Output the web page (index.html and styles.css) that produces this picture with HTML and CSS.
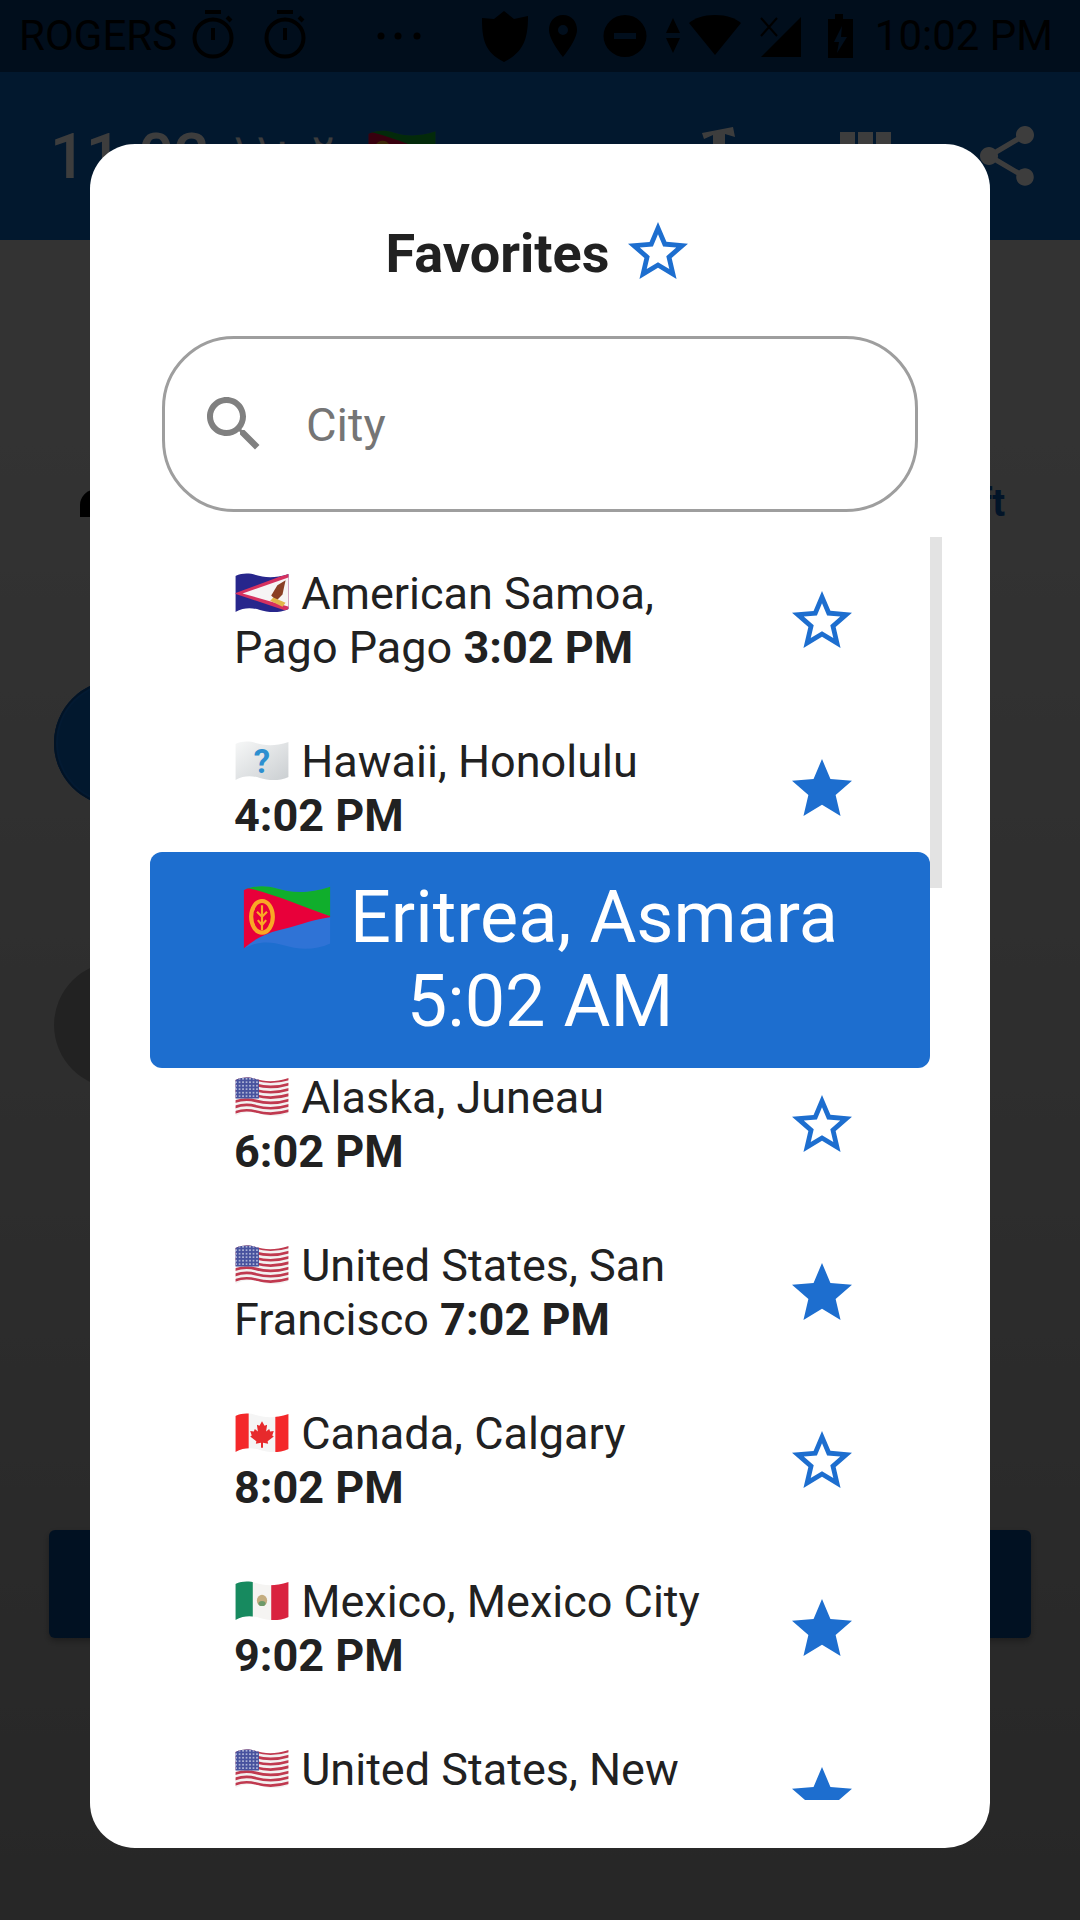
FILE: index.html
```html
<!DOCTYPE html>
<html lang="en">
<head>
  <meta charset="UTF-8">
  <title>Favorites</title>
  <link rel="stylesheet" href="styles.css">
</head>
<body>
  <svg class="defs" width="0" height="0">
    <defs>
      <clipPath id="wave-clip">
        <path d="M1 3C8 0 14 0 21 2S38 6 53 1V35C42 40 32 38 25 36S10 33 1 38Z"/>
      </clipPath>
      <path id="wave" d="M0 2C8 -1 14 -1 21 1S38 5 54 0" fill="none"/>
      <pattern id="us-stars" width="3.400" height="3.400" patternUnits="userSpaceOnUse">
        <circle cx="1.700" cy="1.700" r=".75" fill="#dfe3f2"/>
      </pattern>
      <linearGradient id="paper" x1="0" y1="0" x2="1" y2="1">
        <stop offset="0" stop-color="#f7f8f8"/>
        <stop offset="1" stop-color="#c9cdd0"/>
      </linearGradient>
      <symbol id="star-o" viewBox="0 0 24 24">
        <path d="M22 9.24l-7.19-.62L12 2 9.19 8.63 2 9.24l5.46 4.73L5.82 21 12 17.27 18.18 21l-1.63-7.03L22 9.24zM12 15.4l-3.76 2.27 1-4.28-3.32-2.88 4.38-.38L12 6.1l1.71 4.04 4.38.38-3.32 2.88 1 4.28L12 15.4z"/>
      </symbol>
      <symbol id="star" viewBox="0 0 24 24">
        <path d="M12 17.27L18.18 21l-1.64-7.03L22 9.24l-7.19-.61L12 2 9.19 8.63 2 9.24l5.46 4.73L5.82 21z"/>
      </symbol>
      <symbol id="flag-us" viewBox="0 0 54 40">
        <g clip-path="url(#wave-clip)">
          <rect width="54" height="40" fill="#f3f1f1"/>
          <g stroke="#c0394f" stroke-width="2.600">
            <use href="#wave" y="1.500"/>
            <use href="#wave" y="6.700"/>
            <use href="#wave" y="11.900"/>
            <use href="#wave" y="17.100"/>
            <use href="#wave" y="22.300"/>
            <use href="#wave" y="27.500"/>
            <use href="#wave" y="32.700"/>
          </g>
          <rect y="0" width="24" height="21" fill="#47529e"/>
          <rect y="0" width="24" height="21" fill="url(#us-stars)"/>
        </g>
      </symbol>
      <symbol id="flag-as" viewBox="0 0 54 40">
        <g clip-path="url(#wave-clip)">
          <rect width="54" height="40" fill="#27268c"/>
          <path d="M54 0L0 20L54 38Z" fill="#d6315f"/>
          <path d="M54 4L8 20L54 33Z" fill="#f6f4f4"/>
          <path d="M50 7L42 12L36 22L41 27L47 21Z" fill="#8a3f24"/>
          <path d="M35 27L47 33L50 29L38 24Z" fill="#e2b64a"/>
        </g>
      </symbol>
      <symbol id="flag-unknown" viewBox="0 0 54 40">
        <g clip-path="url(#wave-clip)">
          <rect width="54" height="40" fill="url(#paper)"/>
          <text class="flag-mark" x="27" y="31">?</text>
        </g>
      </symbol>
      <symbol id="flag-ca" viewBox="0 0 54 40">
        <g clip-path="url(#wave-clip)">
          <rect width="54" height="40" fill="#f5f5f5"/>
          <rect width="14" height="40" fill="#f4282a"/>
          <rect x="40" width="14" height="40" fill="#f4282a"/>
          <path d="M27 8L29.500 12.500L32 11.500L31 18L34 15.500L35 18L38.500 17.500L37 22L38.500 23L32.500 27.500L33 30L28 29V34H26V29L21 30L21.500 27.500L15.500 23L17 22L15.500 17.500L19 18L20 15.500L23 18L22 11.500L24.500 12.500Z" fill="#e72a2c"/>
        </g>
      </symbol>
      <symbol id="flag-mx" viewBox="0 0 54 40">
        <g clip-path="url(#wave-clip)">
          <rect width="54" height="40" fill="#f5f4f2"/>
          <rect width="18" height="40" fill="#178a5f"/>
          <rect x="36" width="18" height="40" fill="#d9233f"/>
          <ellipse cx="27" cy="19" rx="5" ry="5.500" fill="#c4ad80"/>
          <ellipse cx="27" cy="22" rx="3.500" ry="2.500" fill="#6d9a6a"/>
        </g>
      </symbol>
      <symbol id="flag-er" viewBox="0 0 54 40">
        <g clip-path="url(#wave-clip)">
          <rect width="54" height="40" fill="#2f73d6"/>
          <path d="M0 0H54V19L0 2Z" fill="#10ae2c"/>
          <path d="M0 1C16 4 34 12 54 19C40 21 32 25 22 27C14 29 6 33 0 39Z" fill="#e8003a"/>
          <ellipse cx="12" cy="19" rx="6.500" ry="9.500" fill="none" stroke="#f9a825" stroke-width="2.500"/>
          <path d="M12 12V27M9 16L12 19L15 16M9.500 21L12 24L14.500 21" fill="none" stroke="#f9a825" stroke-width="1.300"/>
        </g>
      </symbol>
    </defs>
  </svg>

  <div class="page">
    <div class="status-bar">
      <span class="status-text carrier">ROGERS</span>
      <svg class="status-left" width="240" height="72" viewBox="0 0 240 72">
        <g fill="none" stroke="#000" stroke-width="4">
          <circle cx="28" cy="38" r="18.500"/>
          <path d="M28 28V40M20 12H36M42 17L46 21"/>
          <circle cx="100" cy="38" r="18.500"/>
          <path d="M100 28V40M92 12H108M114 17L118 21"/>
        </g>
        <circle cx="196" cy="36" r="3.500"/>
        <circle cx="213" cy="36" r="3.500"/>
        <circle cx="232" cy="36" r="3.500"/>
      </svg>
      <svg class="status-right" width="390" height="72" viewBox="0 0 390 72">
        <path d="M28 11L38 19L52 16C52 38 48 52 28 62C8 52 6 38 6 18L18 19Z"/>
        <path fill-rule="evenodd" d="M87 15C78 15 73 22 73 30C73 40 87 57 87 57S101 40 101 30C101 22 96 15 87 15ZM87 25A5 5 0 1 1 87 35A5 5 0 1 1 87 25Z"/>
        <path fill-rule="evenodd" d="M149 15A21.500 21 0 1 0 149 57A21.500 21 0 1 0 149 15ZM138 33H160V39H138Z"/>
        <path d="M197 18L204 33H190ZM197 53L190 38H204Z"/>
        <path d="M239 15C227 15 219 18 213 23L239 55L265 23C259 18 251 15 239 15Z"/>
        <path d="M285 57L325 17V57Z"/>
        <path d="M285 18L301 36M301 18L285 36" fill="none" stroke="#000" stroke-width="2"/>
        <path fill-rule="evenodd" d="M359 14H367V19H377V58H352V19H359ZM366 26L358 42H363L361 53L371 37H365Z"/>
      </svg>
      <span class="status-text clock">10:02 PM</span>
    </div>

    <div class="app-bar">
      <span class="app-time">11:02</span>
      <span class="app-local">١١:٠٢</span>
      <svg class="app-flag" width="70" height="52"><use href="#flag-er"/></svg>
      <div class="app-actions">
        <svg class="action" viewBox="0 0 72 72"><path d="M17 13L48 7L50 17L40 14V50H28V15L19 19Z"/></svg>
        <svg class="action" viewBox="0 1 24 24"><path d="M10 18h5V5h-5v13zm-6 0h5V5H4v13zM16 5v13h5V5h-5z"/></svg>
        <svg class="action" viewBox="0 0 24 24"><path d="M18 16.080c-.76 0-1.440.300-1.960.770L8.910 12.700c.050-.230.090-.460.090-.700s-.040-.470-.090-.700l7.050-4.110c.540.500 1.250.810 2.040.810 1.660 0 3-1.340 3-3s-1.340-3-3-3-3 1.340-3 3c0 .240.040.470.090.700L8.040 9.810C7.500 9.310 6.790 9 6 9c-1.660 0-3 1.340-3 3s1.340 3 3 3c.790 0 1.500-.310 2.040-.810l7.120 4.160c-.050.210-.080.430-.080.650 0 1.610 1.310 2.920 2.920 2.920 1.610 0 2.920-1.310 2.920-2.920s-1.310-2.920-2.920-2.920z"/></svg>
      </div>
    </div>

    <div class="content">
      <div class="label-row">
        <svg class="home" width="26" height="28" viewBox="0 0 26 28"><path d="M14 0C6 2 0 8 0 16V28H26V0Z"/></svg>
        <span class="label-end">ft</span>
      </div>
      <div class="disc disc-blue"></div>
      <div class="disc disc-gray"></div>
      <div class="wide-btn"></div>
    </div>
  </div>

  <div class="scrim">
    <section class="dialog">
      <h2 class="dialog-title">
        <span class="dialog-name">Favorites</span>
        <svg class="star-icon"><use href="#star-o"/></svg>
      </h2>

      <label class="search">
        <svg class="search-icon" viewBox="0 0 24 24"><path d="M15.500 14h-.790l-.280-.270C15.410 12.590 16 11.110 16 9.500 16 5.910 13.090 3 9.500 3S3 5.910 3 9.500 5.910 16 9.500 16c1.610 0 3.090-.590 4.230-1.570l.270.280v.790l5 4.990L20.490 19l-4.990-5zm-6 0C7.010 14 5 11.990 5 9.500S7.010 5 9.500 5 14 7.010 14 9.500 11.990 14 9.500 14z"/></svg>
        <input type="text" placeholder="City">
      </label>

      <div class="list-wrap">
        <div class="scroll-thumb"></div>
        <ul class="city-list">
          <li class="city">
            <p><svg class="flag"><use href="#flag-as"/></svg> American Samoa, Pago Pago <b>3:02 PM</b></p>
            <svg class="star-icon"><use href="#star-o"/></svg>
          </li>
          <li class="city">
            <p><svg class="flag"><use href="#flag-unknown"/></svg> Hawaii, Honolulu <b>4:02 PM</b></p>
            <svg class="star-icon"><use href="#star"/></svg>
          </li>
          <li class="city-current">
            <p><svg class="flag-big"><use href="#flag-er"/></svg> Eritrea, Asmara</p>
            <p>5:02 AM</p>
          </li>
          <li class="city">
            <p><svg class="flag"><use href="#flag-us"/></svg> Alaska, Juneau <b>6:02 PM</b></p>
            <svg class="star-icon"><use href="#star-o"/></svg>
          </li>
          <li class="city">
            <p><svg class="flag"><use href="#flag-us"/></svg> United States, San Francisco <b>7:02 PM</b></p>
            <svg class="star-icon"><use href="#star"/></svg>
          </li>
          <li class="city">
            <p><svg class="flag"><use href="#flag-ca"/></svg> Canada, Calgary <b>8:02 PM</b></p>
            <svg class="star-icon"><use href="#star-o"/></svg>
          </li>
          <li class="city">
            <p><svg class="flag"><use href="#flag-mx"/></svg> Mexico, Mexico City <b>9:02 PM</b></p>
            <svg class="star-icon"><use href="#star"/></svg>
          </li>
          <li class="city">
            <p><svg class="flag"><use href="#flag-us"/></svg> United States, New York <b>10:02 PM</b></p>
            <svg class="star-icon"><use href="#star"/></svg>
          </li>
        </ul>
      </div>
    </section>
  </div>
</body>
</html>
```

FILE: styles.css
```css
* {
  box-sizing: border-box;
}
html, body {
  margin: 0;
  width: 1080px;
  height: 1920px;
  overflow: hidden;
}
body {
  position: relative;
  font-family: Roboto, "Noto Sans", sans-serif;
  color: #212121;
}
.defs {
  position: absolute;
}

/* screen behind the dialog */
.page {
  height: 1920px;
  background: linear-gradient(#d5d5d5 20%, #a3a3a3);
}
.status-bar {
  display: flex;
  align-items: center;
  height: 72px;
  padding: 0 27px 0 19px;
  background: #083a75;
  color: #000;
}
.status-text {
  font-size: 42px;
  line-height: 72px;
}
.carrier {
  margin-right: 8px;
}
.status-right {
  margin-left: auto;
  margin-right: 9px;
}
.app-bar {
  display: flex;
  align-items: center;
  height: 168px;
  padding: 0 37px 0 50px;
  background: #0c64c0;
  color: #fff;
}
.app-time {
  font-size: 63px;
  font-weight: 500;
}
.app-local {
  margin-left: 20px;
  padding-bottom: 14px;
  font-family: "DejaVu Sans", sans-serif;
  font-size: 42px;
}
.app-flag {
  margin-left: 33px;
}
.app-actions {
  display: flex;
  gap: 71px;
  margin-left: auto;
}
.action {
  width: 72px;
  height: 72px;
  fill: #fff;
}
.content {
  padding: 0 49px;
}
.label-row {
  display: flex;
  align-items: center;
  justify-content: space-between;
  height: 30px;
  margin-top: 248px;
  padding: 0 26px 0 31px;
}
.label-end {
  font-size: 38px;
  font-weight: 700;
  color: #0a55a8;
}
.disc {
  width: 126px;
  height: 126px;
  margin-left: 5px;
  border-radius: 50%;
}
.disc-blue {
  margin-top: 162px;
  background: #0c64c0;
  box-shadow: inset 0 0 0 2px #0a4f9a, inset 0 0 0 4px #0e6cd0;
}
.disc-gray {
  margin-top: 156px;
  background: #8e8e8e;
}
.wide-btn {
  height: 108px;
  margin-top: 442px;
  border-radius: 6px;
  background: #05478f;
  box-shadow: 0 3px 6px rgba(0, 0, 0, 0.3);
}

/* dialog */
.scrim {
  position: absolute;
  inset: 0;
  display: flex;
  flex-direction: column;
  align-items: center;
  padding-top: 144px;
  background: rgba(0, 0, 0, 0.76);
}
.dialog {
  width: 900px;
  height: 1704px;
  padding-top: 72px;
  border-radius: 45px;
  background: #fff;
}
.dialog-title {
  display: flex;
  justify-content: center;
  align-items: center;
  gap: 13px;
  height: 72px;
  margin: 0;
  font-size: 54px;
  font-weight: 700;
}
.dialog-name {
  padding-top: 3px;
}
.star-icon {
  flex: none;
  width: 72px;
  height: 72px;
  fill: #1d6ecf;
}
.search {
  display: flex;
  align-items: center;
  width: 756px;
  height: 176px;
  margin: 48px 0 25px 72px;
  padding-left: 33px;
  border: 3px solid #9e9e9e;
  border-radius: 72px;
}
.search-icon {
  flex: none;
  width: 72px;
  height: 72px;
  fill: #808080;
}
.search input {
  flex: 1;
  min-width: 0;
  margin-left: 36px;
  padding: 0;
  border: none;
  outline: none;
  background: none;
  font-family: inherit;
  font-size: 47px;
}
.search input::placeholder {
  color: #757575;
  opacity: 1;
}
.list-wrap {
  position: relative;
  width: 792px;
  height: 1263px;
  margin-left: 60px;
  overflow: hidden;
}
.scroll-thumb {
  position: absolute;
  top: 0;
  right: 0;
  width: 12px;
  height: 351px;
  background: #e3e3e3;
}
.city-list {
  width: 780px;
  margin: 0;
  padding: 0;
  list-style: none;
}
.city {
  display: flex;
  align-items: center;
  gap: 36px;
  height: 168px;
  padding: 0 72px 0 84px;
  font-size: 45px;
  line-height: 54px;
}
.city p {
  flex: 1;
  margin: 0;
}
.city b {
  font-weight: 700;
  white-space: nowrap;
}
.flag {
  width: 56px;
  height: 41px;
  vertical-align: -5px;
}
.flag-mark {
  fill: #2d8fd0;
  font-family: Roboto, sans-serif;
  font-size: 32px;
  font-weight: 700;
  text-anchor: middle;
}
.city-current {
  position: relative;
  height: 216px;
  margin: -21px 0 -27px;
  padding-top: 24px;
  border-radius: 12px;
  background: #1d6ecf;
  color: #fff;
  font-size: 72px;
  line-height: 84px;
  text-align: center;
}
.city-current p {
  margin: 0;
}
.flag-big {
  width: 90px;
  height: 67px;
  vertical-align: -10px;
}
```
